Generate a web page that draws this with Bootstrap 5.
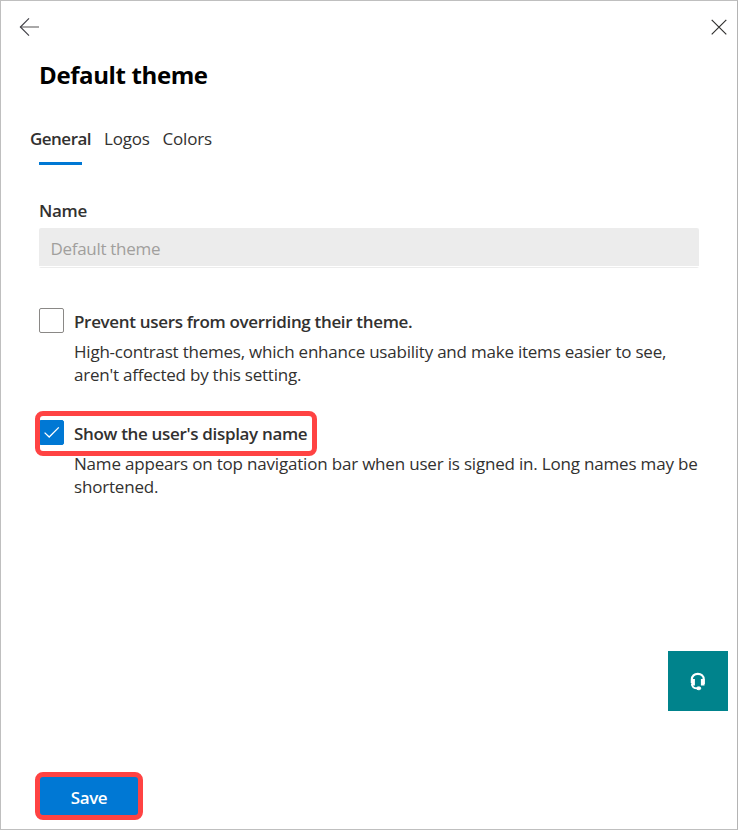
<!DOCTYPE html>
<html lang="en">
<head>
<meta charset="utf-8">
<meta name="viewport" content="width=device-width, initial-scale=1">
<title>Default theme</title>
<link href="https://cdn.jsdelivr.net/npm/bootstrap@5.3.0/dist/css/bootstrap.min.css" rel="stylesheet">
<style>
body{font-family:"Open Sans","Noto Sans",sans-serif;font-size:17px;line-height:23px;font-weight:400;color:#323130;letter-spacing:-.225px;background:#fff}
.panel{height:830px;border:1px solid #bfbfbf;border-right-color:#b4b4b4}
.panel-top{height:58px;padding:16px 9px 0 18px}
.panel-body{padding:0 38px}
.title{font-size:24px;line-height:32px;font-weight:700;color:#000;letter-spacing:-.38px}
.tabs{margin:36px 0 0 -9px;gap:13px}
.tabs .nav-link{padding:0;color:#323130;line-height:24px;height:38px;border:0;letter-spacing:-.22px}
.tabs .nav-link.active{font-weight:600;letter-spacing:-.52px}
.tabs .nav-link.active::after{content:"";display:block;height:3px;width:43px;margin:11px 0 0 9px;background:#0078d4}
.strong-label{font-weight:600;line-height:26px;letter-spacing:-.33px;padding-top:1px}
.name-label{margin-top:33px;line-height:24px;margin-bottom:4.5px}
.name-box{height:40px;border:0;border-radius:2px;padding:2px 12px 0 11.5px;font-size:17px;letter-spacing:-.3px;color:#a19f9d}
.name-box:disabled{background:linear-gradient(#ececec 38px,#fff 38px,#fff 39px,#ececec 39px);opacity:1}
.option{gap:10px;margin-top:34px}
.first-option{margin-top:40px}
.option .form-check-input{width:25px;height:25px;margin:0;border:1px solid #8a8886;border-radius:2px;background-size:25px}
.option .form-check-input:checked{border-color:#0078d4;background-color:#0078d4;background-image:url("data:image/svg+xml,%3Csvg xmlns='http://www.w3.org/2000/svg' viewBox='0 0 25 25' fill='none' stroke='white' stroke-width='1.3'%3E%3Cpath d='M5.6 12.6l4.6 4.4L19.8 7.4'/%3E%3C/svg%3E")}
.option-text{margin:5px -20px 0 0}
.display-name-text{letter-spacing:-.19px}
.callout-box{position:absolute;border:5px solid #ff4343;border-radius:8px;pointer-events:none}
.callout-option{left:-4px;top:-9px;width:282px;height:45px}
.save-btn{width:108px;height:48px;border:5px solid #ff4343;border-radius:8px;background:#0078d4;color:#fff;font-size:17px;font-weight:600;letter-spacing:-.4px;padding:3px 0 0}
.save-btn:hover{background:#106ebe;color:#fff;border-color:#ff4343}
.help-btn{width:60px;height:60px;background:#00838c;margin:0 9px 61px auto;padding:0}
.panel-foot{padding:0 0 9px 34px}
</style>
<script src="https://cdn.jsdelivr.net/npm/bootstrap@5.3.0/dist/js/bootstrap.bundle.min.js"></script>
</head>
<body>
<main class="panel d-flex flex-column overflow-hidden">
  <header class="panel-top d-flex justify-content-between align-items-start">
    <a href="#" aria-label="Back" class="d-flex"><svg width="22" height="20" fill="none"><path d="M1 10H20" stroke="#8c8b8b" stroke-width="1.5"/><path d="M10 1.3L1.4 10L10 18.7" stroke="#44434a" stroke-width="1.2"/></svg></a>
    <a href="#" aria-label="Close" class="d-flex"><svg width="18" height="20" fill="none" stroke="#323130" stroke-width="1.2"><path d="M1.7 2.8L16.3 17.4M16.3 2.8L1.7 17.4"/></svg></a>
  </header>
  <section class="panel-body">
    <h1 class="title mb-0">Default theme</h1>
    <nav class="nav tabs flex-nowrap">
      <a class="nav-link active" href="#">General</a>
      <a class="nav-link" href="#">Logos</a>
      <a class="nav-link" href="#">Colors</a>
    </nav>
    <label for="themeName" class="strong-label name-label d-block">Name</label>
    <input id="themeName" class="form-control name-box" value="Default theme" disabled>
    <div class="option first-option d-flex">
      <input class="form-check-input flex-shrink-0" type="checkbox" id="prevent">
      <div>
        <label for="prevent" class="strong-label d-block">Prevent users from overriding their theme.</label>
        <p class="option-text mb-0">High-contrast themes, which enhance usability and make items easier to see,<br>aren't affected by this setting.</p>
      </div>
    </div>
    <div class="option d-flex position-relative">
      <input class="form-check-input flex-shrink-0" type="checkbox" id="show" checked>
      <div>
        <label for="show" class="strong-label d-block">Show the user's display name</label>
        <p class="option-text display-name-text mb-0">Name appears on top navigation bar when user is signed in. Long names may be<br>shortened.</p>
      </div>
      <span class="callout-box callout-option"></span>
    </div>
  </section>
  <footer class="mt-auto">
    <button class="btn help-btn rounded-0 d-flex align-items-center justify-content-center" aria-label="Support">
      <svg width="16" height="20" fill="none" stroke="#fff"><path d="M1.8 12V8.6C1.8 5 4.4 2.9 7.8 2.9S13.8 5 13.8 8.6V13" stroke-width="2.1"/><path d="M3.1 8V14.4M12.7 8V14.4" stroke-width="3.6"/><path d="M2 13C2 16 4.2 17.4 7.4 17.4" stroke-width="1.8"/><rect x="6.7" y="15.9" width="4" height="2.8" rx="1.4" fill="#fff"/></svg>
    </button>
    <div class="panel-foot"><button class="btn save-btn">Save</button></div>
  </footer>
</main>
</body>
</html>
